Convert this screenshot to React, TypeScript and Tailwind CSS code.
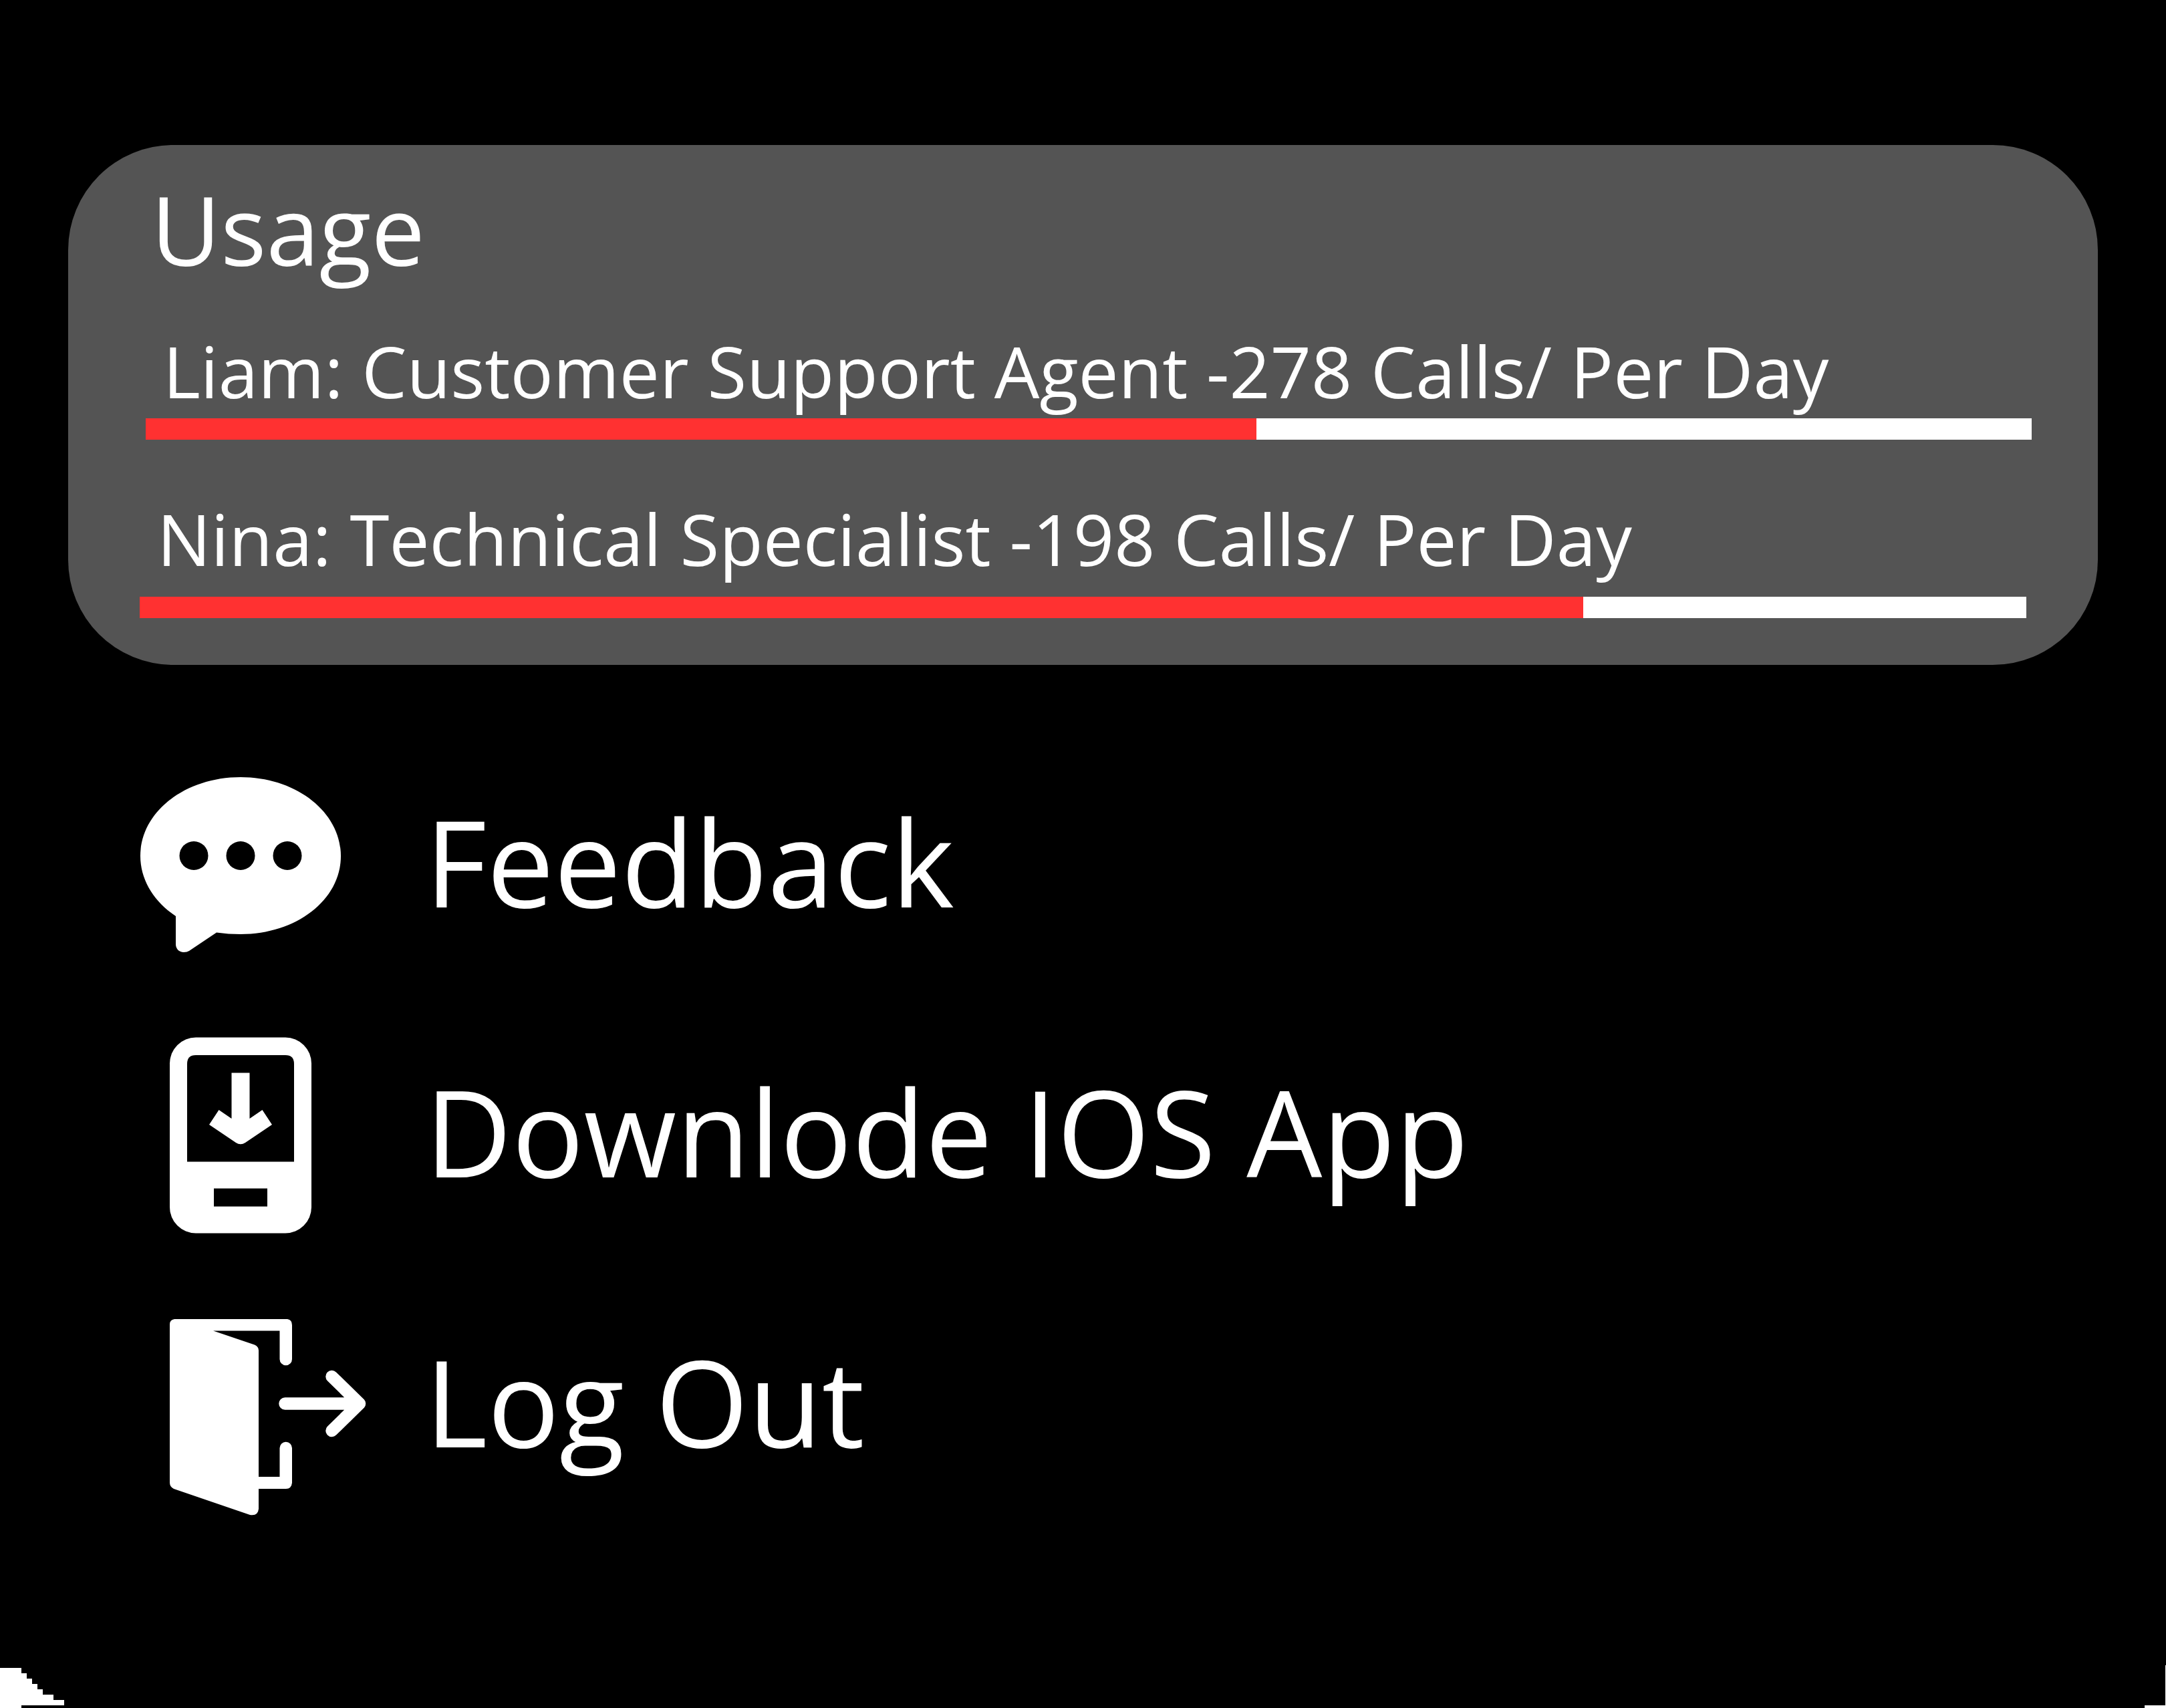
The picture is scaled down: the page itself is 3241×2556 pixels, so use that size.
import type { ReactNode } from "react";

function FeedbackIcon() {
  return (
    <svg viewBox="208 1109 360 360" className="size-[360px] shrink-0" aria-hidden="true">
      <path
        fill="#fff"
        d="M360 1163C443 1163 510 1215 510 1281S443 1398 360 1398Q342 1398 324 1395.500L283 1423Q280 1425 275 1425C268 1425 263 1420 263 1413V1371C231 1350 210 1317 210 1281C210 1215 277 1163 360 1163Z"
      />
      <circle cx="290" cy="1280.500" r="21.500" />
      <circle cx="360" cy="1280.500" r="21.500" />
      <circle cx="430" cy="1280.500" r="21.500" />
    </svg>
  );
}

function DownloadIcon() {
  return (
    <svg viewBox="208 1513 360 360" className="size-[360px] shrink-0" aria-hidden="true">
      <rect x="254" y="1552.500" width="212" height="293" rx="39" fill="#fff" />
      <path d="M280 1738.500V1592Q280 1579 293 1579H427Q440 1579 440 1592V1738.500Z" />
      <path
        fill="#fff"
        d="M346.500 1605.500H373.500V1674L392.500 1661L407 1683L367 1710Q360 1714.500 353 1710L313 1683L327.500 1661L346.500 1674Z"
      />
      <rect x="320" y="1778.500" width="80" height="27" />
    </svg>
  );
}

function LogOutIcon() {
  return (
    <svg viewBox="208 1917 360 360" className="size-[360px] shrink-0" aria-hidden="true">
      <path
        fill="#fff"
        d="M261 1974H430Q437 1975 437 1983V2034A9 9 0 0 1 418.500 2034V1991.500H319L381 2012.500Q387 2015 387 2021V2210H418.500V2167A9 9 0 0 1 437 2167V2219Q436 2228 428 2228H387V2258Q386 2269 374 2267L260 2228Q254 2225 254 2219V1982Q254 1975 261 1974Z"
      />
      <path
        d="M426.500 2100.500H538M496.500 2060L538 2100.500L496.500 2141"
        fill="none"
        stroke="#fff"
        strokeWidth="18.500"
        strokeLinecap="round"
        strokeLinejoin="round"
      />
    </svg>
  );
}

function Bar({ label, percent }: { label: string; percent: number }) {
  return (
    <div
      role="progressbar"
      aria-label={label}
      aria-valuenow={Math.round(percent)}
      aria-valuemin={0}
      aria-valuemax={100}
      className="h-8 bg-white"
    >
      <div className="h-full bg-[#ff3131]" style={{ width: `${percent}%` }} />
    </div>
  );
}

function MenuItem({ icon, children }: { icon: ReactNode; children: ReactNode }) {
  return (
    <li>
      <button type="button" className="flex w-full items-center gap-[68px] text-left text-[179px] leading-[200px]">
        {icon}
        <span className="whitespace-nowrap">{children}</span>
      </button>
    </li>
  );
}

export default function App() {
  return (
    <div className="relative min-h-screen bg-black px-[102px] pt-[217px] font-['Open_Sans',sans-serif] text-white">
      <section className="rounded-[157px] bg-[#545454] pt-[46px] pb-[70px]">
        <h1 className="pl-[124px] text-[143px] leading-[160px]">Usage</h1>
        <div className="mt-[72px] mr-[99px] ml-[116px]">
          <p className="mb-[11px] pl-[26px] text-[107px] leading-[120px] whitespace-nowrap">
            Liam: Customer Support Agent -278 Calls/ Per Day
          </p>
          <Bar label="Liam usage" percent={58.9} />
        </div>
        <div className="mt-[88px] mr-[107px] ml-[107px]">
          <p className="mb-[27px] pl-[26px] text-[107px] leading-[120px] whitespace-nowrap">
            Nina: Technical Specialist -198 Calls/ Per Day
          </p>
          <Bar label="Nina usage" percent={76.5} />
        </div>
      </section>

      <nav className="mt-[114px] pl-[106px]" aria-label="Account">
        <ul className="flex flex-col gap-11">
          <MenuItem icon={<FeedbackIcon />}>Feedback</MenuItem>
          <MenuItem icon={<DownloadIcon />}>Downlode IOS App</MenuItem>
          <MenuItem icon={<LogOutIcon />}>Log Out</MenuItem>
        </ul>
      </nav>

      <svg viewBox="0 0 96 60" className="absolute bottom-0 left-0 h-[60px] w-24" aria-hidden="true">
        <path fill="#fff" d="M0 0H32V8H40V16H48V24H56V32H64V40H80V48H96V56H32V60H0Z" />
      </svg>
      <svg viewBox="0 0 32 64" className="absolute right-0 bottom-0 h-16 w-8" aria-hidden="true">
        <path fill="#fff" d="M31 0H32V64H0V60H31Z" />
      </svg>
    </div>
  );
}
